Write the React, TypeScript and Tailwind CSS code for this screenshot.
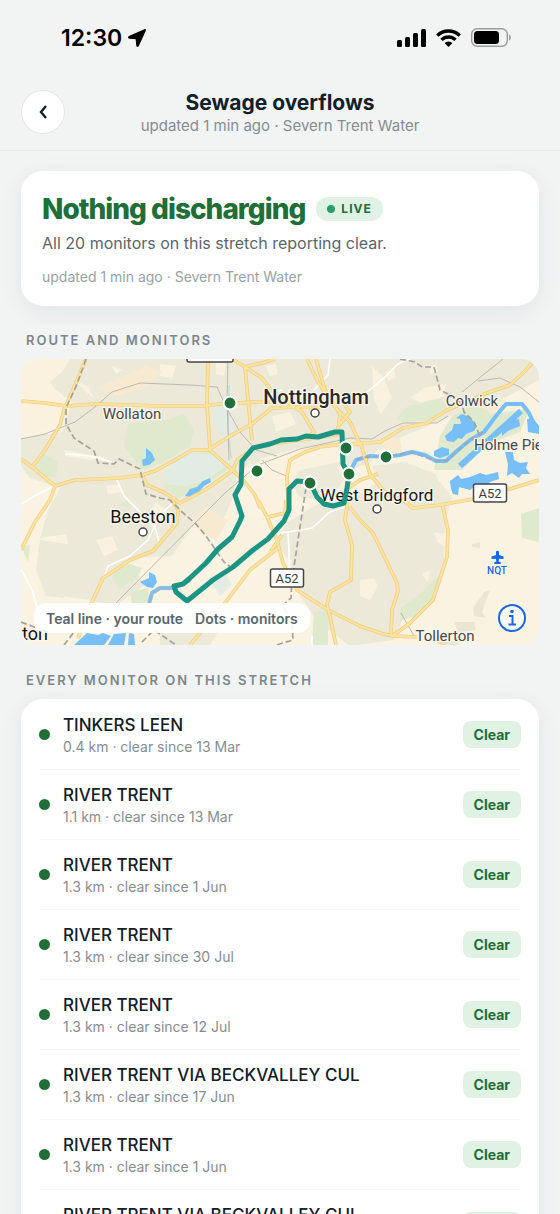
import React from "react";

type Point = [number, number];

const urbanAreas = [
  "M62 359H539V380L500 400 470 408 430 425 395 440 375 452 372 462 350 470 330 500 300 498 290 480 262 478 250 462 236 478 232 500 222 522 196 520 172 556 130 558 104 574 92 600 60 596 52 566 70 552 66 534 40 538 48 510 60 488 30 478 21 466V438L62 432 72 402 48 384Z",
  "M318 504 348 502 378 482 410 472 440 482 452 498 445 522 444 560 436 590 408 606 394 640 350 646 318 622 300 596 288 560 276 540 288 522Z",
  "M372 466 404 462 436 474 440 486 410 488 380 484Z",
  "M94 584 126 564 146 584 118 604 92 602Z",
  "M40 540 74 545 64 598 46 596 36 570Z",
  "M160 622 196 616 226 620 210 645H160Z",
];

const ruralPatches = [
  "M21 359H70L62 372 50 382 62 400 60 425 21 436Z",
  "M262 458 300 448 342 444 340 462 300 470 284 492 276 522 258 500 246 480Z",
  "M252 514 272 540 236 562 212 556 236 540Z",
  "M372 366 384 378 392 398 381 414 374 400Z",
  "M410 398 424 388 446 384 444 396 424 404Z",
  "M160 364 176 366 172 378 160 376Z",
  "M96 540 112 536 118 550 104 556Z",
  "M64 450 84 454 110 458 90 460 66 456Z",
  "M74 380 88 386 94 398 86 392Z",
  "M266 366 276 364 278 374 270 376Z",
  "M112 366 122 370 116 374Z",
  "M216 362 226 364 224 376 216 374Z",
  "M434 532 446 534 444 546 438 542Z",
  "M422 574 430 570 428 582Z",
  "M360 580 374 578 378 586 370 600 360 596Z",
  "M156 502 168 512 158 522 150 512Z",
  "M106 486 120 484 122 492 108 494Z",
  "M272 416 290 412 296 424 276 432Z",
  "M338 466 346 462 350 470 340 474Z",
  "M386 372 394 370 396 378 388 380Z",
  "M430 366 436 364 438 372 430 374Z",
];

const parks = [
  "M128 424 168 420 184 414 194 430 190 446 164 462 142 470 124 446Z",
  "M190 456 210 450 230 468 212 480 178 498 164 488 168 472Z",
  "M34 464 44 454 58 462 56 478 42 476Z",
  "M396 418 408 406 440 398 446 406 430 420 402 422Z",
  "M434 470 440 436 452 416 476 404 492 414 530 408 520 432 488 444 462 470Z",
  "M112 576 124 562 142 568 136 580 118 588Z",
  "M130 592 148 588 150 602 132 604Z",
  "M521 514 539 508V542L522 538Z",
  "M400 608 420 594 440 574 436 596 418 616 400 620Z",
  "M314 612 328 610 328 645H312Z",
  "M22 548 30 544 28 562Z",
  "M118 505 128 500 130 508Z",
];

const industrial = [
  "M214 400 230 396 234 430 222 440 214 420Z",
  "M190 452 216 456 226 466 206 480 186 486 164 484 166 470Z",
  "M208 578 224 572 232 584 220 596Z",
];

const peachAreas = [
  "M96 388 120 378 146 366 162 372 150 384 120 396Z",
  "M382 440 400 438 402 452 384 454Z",
  "M478 408 498 396 506 404 492 428 480 428Z",
  "M190 520 206 508 228 520 216 540 204 534Z",
];

const greyAreas = [
  "M473 608 484 592 490 590 482 612 486 618 474 616Z",
  "M454 622 474 622 476 630 458 632Z",
  "M472 544 480 542 480 548 472 547Z",
  "M440 642 462 640 458 645H440Z",
];

const lakes = [
  "M146 448 152 453 155 460 149 465 143 466 142 460 146 458Z",
  "M185 496 190 489 197 487 203 481 210 478 211 482 204 486 200 491 190 497Z",
  "M456 418 462 414 470 417 477 426 474 431 466 434 462 439 458 438 454 442 447 441 445 436 452 430 454 424 461 424 460 419Z",
  "M434 451 442 447 449 449 449 455 440 458 434 456Z",
  "M502 432 512 420 519 419 520 426 508 431 502 436Z",
  "M527 419 533 418 539 426V434L528 432Z",
  "M505 452 513 452 514 460 520 463 528 462 526 468 530 474 522 474 519 478 512 473 507 476 508 464Z",
  "M450 481 458 475 461 479 470 477 480 473 486 475 498 472 499 479 490 482 486 488 476 485 470 490 459 487 458 495 453 494 451 489Z",
  "M140 582 149 578 149 572 155 575 157 582 153 588 147 587Z",
  "M74 645 87 633 98 635 103 633 111 636 104 645Z",
  "M108 645 114 634 126 633 124 645Z",
  "M128 645 129 633 134 634 135 645Z",
];

const majorRoads = [
  "M21 401 45 403 67 406 95 404 130 405 160 406 203 406 219 404 258 402 276 402",
  "M86 359 75 385 64 410 60 425 45 450 32 467",
  "M21 459 32 467 55 486 50 500 35 522 21 550",
  "M55 486 75 480 100 479 120 478 142 475 155 471 175 460 192 450 208 450 230 436 252 424 272 408 298 407 320 408",
  "M142 475 147 485 165 493 180 503 205 490 232 471 238 459 258 446 300 440 340 434",
  "M172 500 178 510 177 523 153 551 130 560 103 578 92 602 78 638",
  "M208 359 207 405 210 450 232 470 244 481 255 495 260 508",
  "M232 359 245 367 248 400 252 440",
  "M245 367 262 363 275 359",
  "M245 367 262 378 271 390 292 405 302 412 314 432 306 440",
  "M307 359 318 382 336 408 350 422 362 448 370 474 388 496",
  "M316 359 325 390 340 414 338 430",
  "M340 424 350 412 344 404",
  "M288 500 287 476 290 460 305 452 320 447 342 444 362 444",
  "M258 500 267 517 277 540 283 563 297 590 328 610 360 626 380 633 392 636 417 637",
  "M268 517 285 513 286 500",
  "M278 548 250 570 225 603 190 645",
  "M270 552 282 535",
  "M348 500 345 520 352 545 351 580 330 592 327 605 330 617 336 645",
  "M350 507 360 520 373 533 397 583 398 591 392 610 391 636",
  "M398 496 413 508 440 505 473 499 510 489 539 480",
  "M442 503 448 530 447 557 433 600 410 623 391 637",
  "M350 444 380 442 403 428 427 423 447 410 487 393 510 385 526 370 532 363",
  "M346 490 360 480 378 474",
  "M432 637 445 645",
];

const minorRoads = [
  "M330 359 328 375 314 390",
  "M360 398 384 378 398 364 410 359",
  "M65 454 90 456 112 462",
  "M117 480 124 496 140 512 155 528 160 544",
  "M54 486 38 494 21 504",
  "M176 500 160 515 148 540 130 556 108 566 104 578",
  "M21 569 32 590 38 610",
  "M288 532 290 572",
  "M270 534 288 532 312 528 330 512 348 506",
  "M312 636 312 645",
  "M262 404 272 392 282 390",
];

const railways = [
  "M21 439 45 434 75 422 95 407 112 392 140 383 190 385 217 387 227 409 240 432 256 450 277 456",
  "M115 604 200 518 225 493 258 465 300 449 350 438 372 439 385 431 403 423 437 423 448 416",
  "M462 392 503 359",
  "M478 381 500 378 520 387 539 402",
  "M228 359 227 400 229 460",
  "M262 460 272 470 286 476",
  "M401 613 414 636",
];

const boundaries = [
  "M86 359 77 384 66 408 66 424 74 438 94 451 98 463 114 464 119 459 140 469 146 494 160 498 170 500 182 512 196 524 206 536 224 562 232 568",
  "M400 359 415 362 422 367 434 367 440 390 452 396 462 404 464 412 474 422 479 434",
  "M306 488 298 540 292 580 291 598 282 606 292 620 293 640 276 645",
  "M21 622 48 632M64 645 74 632M142 642 154 630 176 645",
];

const riverPath =
  "M349 474 356 460 370 456 386 457 400 455 412 452 425 455 436 461 446 461 458 450 470 440 484 432 496 416 506 404 522 404 529 413 534 424 539 430";

const routePath =
  "M342 432 335 432 318 437 306 436 297 439 281 440 270 444 253 448 242 461 241 484 235 495 242 516 240 521 232 537 218 549 206 563 190 578 183 584 174 586 176 592 187 601 213 580 233 567 253 550 268 539 284 521 289 510 289 489 297 481 310 482 317 497 324 504 333 506 344 503 347 488 349 475 343 464Z";

const monitorDots: Point[] = [
  [230, 403],
  [257, 471],
  [310, 483],
  [346, 448],
  [349, 474],
  [386, 457],
];

function Paths({ list, className }: { list: string[]; className: string }) {
  return (
    <g className={className}>
      {list.map((d) => (
        <path key={d} d={d} />
      ))}
    </g>
  );
}

function RoadShield({ x, y, children }: { x: number; y: number; children?: string }) {
  const width = children ? 33 : 46;
  return (
    <g>
      <rect x={x - width / 2} y={y - 9} width={width} height="18" rx="2" className="fill-white stroke-[#44444a] stroke-[1.5]" />
      {children && (
        <text x={x} y={y + 5} textAnchor="middle" className="fill-[#3c3c40] text-[13px]">
          {children}
        </text>
      )}
    </g>
  );
}

function RouteMap() {
  return (
    <svg viewBox="21 359 518 286" role="img" aria-label="Map of route and monitors" className="block h-auto w-full bg-[#faf3e1] font-[Roboto,sans-serif]">
      <Paths list={urbanAreas} className="fill-[#ece9d9]" />
      <Paths list={ruralPatches} className="fill-[#faf2df]" />
      <Paths list={peachAreas} className="fill-[#f7ead1]" />
      <Paths list={parks} className="fill-[#dfe9cd]" />
      <Paths list={industrial} className="fill-[#e3ece2]" />
      <Paths list={greyAreas} className="fill-[#ebe5d3]" />

      <Paths list={lakes} className="fill-[#76bff9]" />
      <path d="M460 466 521 411" className="fill-none stroke-[#76bff9] stroke-[6]" />
      <path d="M190 580 174 588 160 588 152 593 149 604" className="fill-none stroke-[#8abde6] stroke-[4]" strokeLinejoin="round" />
      <path d={riverPath} className="fill-none stroke-[#76bff9] stroke-[4]" strokeLinejoin="round" />
      <path d="M229 385 228 430 231 458" className="fill-none stroke-[#b9d4e2] stroke-1" />

      <Paths list={minorRoads} className="fill-none stroke-white stroke-[1.6]" />
      <Paths list={railways} className="fill-none stroke-[#b5b2aa] stroke-[0.9] [stroke-linejoin:round]" />
      <Paths list={majorRoads} className="fill-none stroke-[#efc985] stroke-[3.6] [stroke-linejoin:round]" />
      <Paths list={majorRoads} className="fill-none stroke-[#fde49a] stroke-[2.3] [stroke-linejoin:round]" />
      <Paths list={boundaries} className="fill-none stroke-[#a5a19b] stroke-[1.7] [stroke-dasharray:6_3]" />
      <path d="M356 460 370 456 386 457 412 452 436 461 446 461 470 440 484 432" className="fill-none stroke-[#98a9bd] stroke-2 [stroke-dasharray:6_3]" />

      <RoadShield x={210} y={353} />
      <RoadShield x={287} y={578}>A52</RoadShield>
      <RoadShield x={490} y={493}>A52</RoadShield>

      <g className="fill-[#47474b] stroke-[#fbf7ea] stroke-[2.5] text-[15px] [paint-order:stroke]">
        <text x="132" y="419" textAnchor="middle">Wollaton</text>
        <text x="472" y="406" textAnchor="middle">Colwick</text>
        <text x="474" y="450">Holme Pie</text>
        <text x="445" y="641" textAnchor="middle">Tollerton</text>
      </g>
      <g className="fill-[#141416] stroke-[#fbf7ea] stroke-[2.5] text-[18px] [paint-order:stroke]">
        <text x="143" y="523" textAnchor="middle">Beeston</text>
        <text x="377" y="501" textAnchor="middle" className="text-[17px]">West Bridgford</text>
        <text x="22" y="640">ton</text>
        <text x="316" y="404" textAnchor="middle" className="fill-[#28282b] text-[20px] font-medium">Nottingham</text>
      </g>
      <g className="fill-white stroke-[#44444a] stroke-[1.5]">
        <circle cx="315" cy="413" r="4" />
        <circle cx="143" cy="532" r="4" />
        <circle cx="377" cy="509" r="4" />
      </g>

      <path d={routePath} className="fill-none stroke-[#1c9484] stroke-[5]" strokeLinejoin="round" />
      {monitorDots.map(([x, y]) => (
        <circle key={x} cx={x} cy={y} r="6.4" className="fill-[#216e39] stroke-white stroke-2" />
      ))}

      <path
        d="M496 551.500Q497.500 550 499 551.500V555L503.500 556.500V559L499 558.800 498.700 561.500 500.800 562.500V564H494.200V562.500L496.300 561.500 496 558.800 491.500 559V556.500L496 555Z"
        className="fill-[#1a66e8]"
      />
      <text x="497" y="574" textAnchor="middle" className="fill-[#1a66e8] stroke-[#fbf7ea] stroke-1 text-[10px] font-medium [paint-order:stroke]">
        NQT
      </text>
    </svg>
  );
}

const monitors = [
  { id: 1, name: "TINKERS LEEN", distance: "0.4 km", since: "13 Mar" },
  { id: 2, name: "RIVER TRENT", distance: "1.1 km", since: "13 Mar" },
  { id: 3, name: "RIVER TRENT", distance: "1.3 km", since: "1 Jun" },
  { id: 4, name: "RIVER TRENT", distance: "1.3 km", since: "30 Jul" },
  { id: 5, name: "RIVER TRENT", distance: "1.3 km", since: "12 Jul" },
  { id: 6, name: "RIVER TRENT VIA BECKVALLEY CUL", distance: "1.3 km", since: "17 Jun" },
  { id: 7, name: "RIVER TRENT", distance: "1.3 km", since: "1 Jun" },
  { id: 8, name: "RIVER TRENT VIA BECKVALLEY CUL", distance: "1.3 km", since: "1 Jun" },
];

function StatusBar() {
  return (
    <div className="flex h-[75px] items-center justify-between pr-12 pl-[61px] text-black">
      <div className="flex items-center gap-1.5">
        <span className="text-[23px] leading-7 font-semibold">12:30</span>
        <svg viewBox="0 0 18 18" className="size-[18px]" aria-hidden="true">
          <path d="M16.300.2.9 7C-.4 7.600-.1 9.600 1.300 9.700L7.700 10.200 8.200 16.600C8.300 18.200 10.200 18.400 10.800 17L17.800 1.700C18.200.7 17.300-.2 16.300.2Z" />
        </svg>
      </div>
      <div className="flex items-center gap-2.5">
        <svg viewBox="0 0 29 18" className="h-[18px] w-[29px]" aria-label="Signal">
          <rect x="0" y="11" width="5" height="7" rx="1.5" />
          <rect x="8" y="8" width="5" height="10" rx="1.5" />
          <rect x="16" y="4" width="5" height="14" rx="1.5" />
          <rect x="24" y="0" width="5" height="18" rx="1.5" />
        </svg>
        <svg viewBox="0 0 25 18" className="h-[18px] w-[25px]" aria-label="Wi-Fi">
          <g className="fill-none stroke-black stroke-[3.4]">
            <path d="M1.300 6.600A16 16 0 0 1 23.700 6.600" />
            <path d="M5.500 10.900A10 10 0 0 1 19.500 10.900" />
          </g>
          <path d="M8.600 14.100A5.600 5.600 0 0 1 16.400 14.100L12.500 18Z" />
        </svg>
        <svg viewBox="0 0 41 20" className="h-5 w-[41px]" aria-label="Battery">
          <rect x=".7" y=".7" width="35.600" height="17.600" rx="5.500" className="fill-none stroke-[#9a9c9c] stroke-[1.4]" />
          <rect x="3" y="3" width="25" height="13" rx="3.500" />
          <path d="M38 6.500C40.400 7 40.400 12 38 12.500Z" className="fill-[#9a9c9c]" />
        </svg>
      </div>
    </div>
  );
}

function SectionTitle({ children }: { children: string }) {
  return <h2 className="px-[5px] text-[13px] leading-5 font-semibold tracking-[2px] text-[#7d878a]">{children}</h2>;
}

export default function App() {
  return (
    <div className="flex h-screen flex-col overflow-hidden bg-[#f2f4f4] font-[Inter,sans-serif] text-[#13202a]">
      <StatusBar />
      <header className="grid h-[76px] shrink-0 grid-cols-[44px_1fr_44px] items-start border-b border-[#e8ebeb] px-[21px] pt-[15px]">
        <button type="button" aria-label="Back" className="flex size-11 items-center justify-center rounded-full border border-[#e2e5e6] bg-white">
          <svg viewBox="0 0 8 14" className="h-3.5 w-2 fill-none stroke-[#13202a] stroke-[2.4]" aria-hidden="true">
            <path d="M7 1 2 7 7 13" />
          </svg>
        </button>
        <div className="text-center">
          <h1 className="text-[21px] leading-[26px] font-bold">Sewage overflows</h1>
          <p className="text-[15px] leading-5 text-[#858d92]">updated 1 min ago · Severn Trent Water</p>
        </div>
      </header>

      <main className="min-h-0 flex-1 overflow-y-auto px-[21px] pt-5 [scrollbar-width:none]">
        <section className="rounded-[22px] bg-white px-[21px] pt-5 pb-[19px] shadow-[0_6px_24px_rgba(20,40,50,0.07)]">
          <div className="flex items-center gap-[11px]">
            <h2 className="text-[28px] leading-9 font-extrabold tracking-[-1px] text-[#216e39]">Nothing discharging</h2>
            <span className="flex h-6 items-center gap-1.5 rounded-full bg-[#e0f2e4] px-[11px] text-[12px] font-bold tracking-[1px] text-[#216e39]">
              <span className="size-2 rounded-full bg-[#2a9d6c]" />
              LIVE
            </span>
          </div>
          <p className="mt-1 text-[16px] leading-6 text-[#59666c]">All 20 monitors on this stretch reporting clear.</p>
          <p className="mt-3 text-[14px] leading-5 text-[#98a1a6]">updated 1 min ago · Severn Trent Water</p>
        </section>

        <section className="mt-6">
          <SectionTitle>ROUTE AND MONITORS</SectionTitle>
          <div className="relative mt-[9px] overflow-hidden rounded-[18px]">
            <RouteMap />
            <p className="absolute bottom-3 left-[13px] flex h-[30px] items-center gap-3 rounded-xl bg-white/90 px-3 text-[14px] font-semibold text-[#59666c]">
              <span>Teal line · your route</span>
              <span>Dots · monitors</span>
            </p>
            <button type="button" aria-label="Map information" className="absolute right-3 bottom-3">
              <svg viewBox="0 0 30 30" className="size-[30px] fill-none stroke-[#1a66e8] stroke-2" aria-hidden="true">
                <circle cx="15" cy="15" r="13" className="fill-white/50" />
                <path d="M12 13h3.500v8.500M11.500 21.500h7.500" />
                <circle cx="15" cy="8.500" r="1.800" className="fill-[#1a66e8] stroke-none" />
              </svg>
            </button>
          </div>
        </section>

        <section className="mt-[25px]">
          <SectionTitle>EVERY MONITOR ON THIS STRETCH</SectionTitle>
          <ul className="mt-[9px] rounded-[22px] bg-white px-[18px] py-px shadow-[0_6px_24px_rgba(20,40,50,0.07)]">
            {monitors.map((m) => (
              <li key={m.id} className="flex h-[70px] items-center gap-[13px] border-b border-[#f5f7f7] last:border-b-0">
                <span className="size-[11px] shrink-0 rounded-full bg-[#216e39]" />
                <div className="min-w-0 flex-1">
                  <h3 className="text-[17px] leading-6 font-medium">{m.name}</h3>
                  <p className="text-[14px] leading-5 text-[#858d92]">
                    {m.distance} · clear since {m.since}
                  </p>
                </div>
                <span className="flex h-[27px] items-center rounded-lg bg-[#e0f2e4] px-[11px] text-[14px] font-bold text-[#216e39]">Clear</span>
              </li>
            ))}
          </ul>
        </section>
      </main>
    </div>
  );
}
